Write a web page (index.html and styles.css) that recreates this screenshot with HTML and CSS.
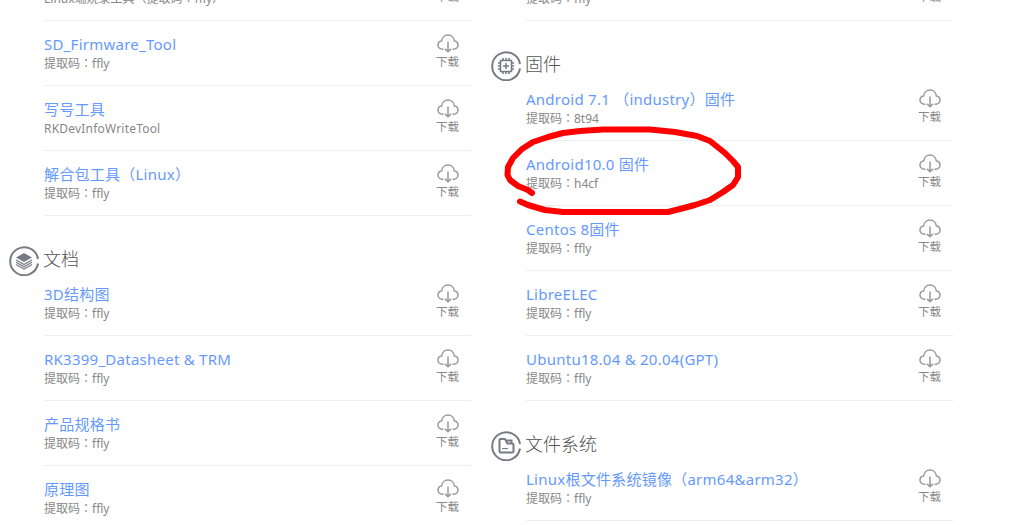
FILE: index.html
```html
<!DOCTYPE html>
<html lang="zh-TW">
<head>
    <meta charset="UTF-8">
    <title>资料下载</title>
    <link rel="stylesheet" href="styles.css">
</head>
<body>

<!-- icons shared by the lists -->
<svg class="sprite">
    <symbol id="cloud" viewBox="0 0 22 19">
        <path d="M6.500 15.200H5.400C2.900 15.200 1 13.400 1 11.100c0-2.100 1.500-3.800 3.600-4.100C5 3.600 7.600 1 11 1s6 2.600 6.400 6c2.100.3 3.600 2 3.600 4.100 0 2.300-1.900 4.100-4.400 4.100h-1.100M11 7.500v10M8 14.900l3 2.900 3-2.900"/>
    </symbol>
    <symbol id="ring" viewBox="0 0 30 30">
        <path d="M29 13A14 14 0 1 0 29 17.500"/>
    </symbol>
</svg>

<div class="container">
    <div class="column">
        <ul class="list">
            <li class="item">
                <div class="info"><a class="name" href="#">Linux烧录工具</a><p class="code">Linux端烧录工具（提取码：ffly）</p></div>
                <a class="download" href="#"><svg><use href="#cloud"/></svg>下载</a>
            </li>
            <li class="item">
                <div class="info"><a class="name" href="#">SD_Firmware_Tool</a><p class="code">提取码：ffly</p></div>
                <a class="download" href="#"><svg><use href="#cloud"/></svg>下载</a>
            </li>
            <li class="item">
                <div class="info"><a class="name" href="#">写号工具</a><p class="code latin">RKDevInfoWriteTool</p></div>
                <a class="download" href="#"><svg><use href="#cloud"/></svg>下载</a>
            </li>
            <li class="item">
                <div class="info"><a class="name" href="#">解合包工具（Linux）</a><p class="code">提取码：ffly</p></div>
                <a class="download" href="#"><svg><use href="#cloud"/></svg>下载</a>
            </li>
        </ul>

        <h3 class="heading">
            <svg class="heading-icon" viewBox="0 0 30 30">
                <use href="#ring"/>
                <path class="solid" d="M15 7l8 4.500-8 4.500-8-4.500z"/>
                <path class="thin" d="M7 14l8 4.500 8-4.500M7 16.300l8 4.500 8-4.500M7 18.600l8 4.500 8-4.500"/>
            </svg>
            <span>文档</span>
        </h3>
        <ul class="list">
            <li class="item">
                <div class="info"><a class="name" href="#">3D结构图</a><p class="code">提取码：ffly</p></div>
                <a class="download" href="#"><svg><use href="#cloud"/></svg>下载</a>
            </li>
            <li class="item">
                <div class="info"><a class="name" href="#">RK3399_Datasheet &amp; TRM</a><p class="code">提取码：ffly</p></div>
                <a class="download" href="#"><svg><use href="#cloud"/></svg>下载</a>
            </li>
            <li class="item">
                <div class="info"><a class="name" href="#">产品规格书</a><p class="code">提取码：ffly</p></div>
                <a class="download" href="#"><svg><use href="#cloud"/></svg>下载</a>
            </li>
            <li class="item">
                <div class="info"><a class="name" href="#">原理图</a><p class="code">提取码：ffly</p></div>
                <a class="download" href="#"><svg><use href="#cloud"/></svg>下载</a>
            </li>
        </ul>
    </div>

    <div class="column">
        <ul class="list">
            <li class="item">
                <div class="info"><a class="name" href="#">U-Boot</a><p class="code">提取码：ffly</p></div>
                <a class="download" href="#"><svg><use href="#cloud"/></svg>下载</a>
            </li>
        </ul>

        <h3 class="heading">
            <svg class="heading-icon" viewBox="0 0 30 30">
                <use href="#ring"/>
                <path class="chip" d="M9.500 9.500h11v11h-11zM15 12v6M12 15h6"/>
                <path class="chip" d="M12 7v2M15 7v2M18 7v2M12 21v2M15 21v2M18 21v2M7 12h2M7 15h2M7 18h2M21 12h2M21 15h2M21 18h2"/>
            </svg>
            <span>固件</span>
        </h3>
        <ul class="list">
            <li class="item">
                <div class="info"><a class="name" href="#">Android 7.1 （industry）固件</a><p class="code">提取码：8t94</p></div>
                <a class="download" href="#"><svg><use href="#cloud"/></svg>下载</a>
            </li>
            <li class="item marked">
                <div class="info"><a class="name" href="#">Android10.0 固件</a><p class="code">提取码：h4cf</p></div>
                <a class="download" href="#"><svg><use href="#cloud"/></svg>下载</a>
                <svg class="scribble" viewBox="500 120 250 100">
                    <path d="M532 193L528 190 518 186 510 180 507.500 175 508 167 513 158 522 149 533 142 548 137 563 133 580 131 603 129.500 650 129.500 675 132 697 136 710 141 725 153 733 161 738 167 738 177 733 185 723 192 710 200 695 205 680 209 668 212 563 212 545 210 528 205 520 201.500"/>
                </svg>
            </li>
            <li class="item">
                <div class="info"><a class="name" href="#">Centos 8固件</a><p class="code">提取码：ffly</p></div>
                <a class="download" href="#"><svg><use href="#cloud"/></svg>下载</a>
            </li>
            <li class="item">
                <div class="info"><a class="name" href="#">LibreELEC</a><p class="code">提取码：ffly</p></div>
                <a class="download" href="#"><svg><use href="#cloud"/></svg>下载</a>
            </li>
            <li class="item">
                <div class="info"><a class="name" href="#">Ubuntu18.04 &amp; 20.04(GPT)</a><p class="code">提取码：ffly</p></div>
                <a class="download" href="#"><svg><use href="#cloud"/></svg>下载</a>
            </li>
        </ul>

        <h3 class="heading">
            <svg class="heading-icon" viewBox="0 0 30 30">
                <use href="#ring"/>
                <path d="M9.500 8H14l2.500 4.500H21q1.500 0 1.500 1.500v6q0 1.500-1.500 1.500H9.500Q8.500 21.500 8.500 20V9q0-1 1-1zM15 9.500h5.500v3"/>
                <path class="thin" d="M11 17.500h6"/>
            </svg>
            <span>文件系统</span>
        </h3>
        <ul class="list">
            <li class="item">
                <div class="info"><a class="name" href="#">Linux根文件系统镜像（arm64&amp;arm32）</a><p class="code">提取码：ffly</p></div>
                <a class="download" href="#"><svg><use href="#cloud"/></svg>下载</a>
            </li>
        </ul>
    </div>
</div>

</body>
</html>
```
FILE: styles.css
```css
body {
    margin: 0;
    height: 525px;
    overflow: hidden;
    background-color: #ffffff;
    font-family: "Noto Sans", "Noto Sans CJK TC", sans-serif;
}

.sprite {
    display: none;
}

.container {
    display: flex;
    gap: 55px;
    margin-top: -44px;
    padding-left: 44px;
}

.column {
    width: 427px;
}

.list {
    list-style: none;
    margin: 0;
    padding: 0;
}

.item {
    display: flex;
    justify-content: space-between;
    box-sizing: border-box;
    height: 65px;
    padding: 13px 12px 0 0;
    border-bottom: 1px solid #eeeeee;
}

.info {
    white-space: nowrap;
}

.name {
    display: block;
    font-size: 15px;
    line-height: 20px;
    letter-spacing: 0.25px;
    color: #6699ff;
    text-decoration: none;
}

.code {
    margin: 1px 0 0;
    font-size: 12px;
    line-height: 18px;
    color: #888888;
    font-variant-ligatures: none;
}

.code.latin {
    letter-spacing: 0.2px;
}

.download {
    display: flex;
    flex-direction: column;
    align-items: center;
    font-size: 11.5px;
    line-height: 18px;
    color: #888888;
    text-decoration: none;
}

.download svg {
    width: 22px;
    height: 19px;
    fill: none;
    stroke: #999999;
    stroke-width: 1.5;
}

.heading {
    display: flex;
    align-items: flex-start;
    gap: 4px;
    box-sizing: border-box;
    height: 55px;
    margin: 0 0 0 -35px;
    padding-top: 30px;
    font-size: 18px;
    font-weight: 300;
    line-height: 26px;
    color: #555555;
}

.heading-icon {
    width: 30px;
    height: 30px;
    fill: none;
    stroke: #777b83;
    stroke-width: 2;
}

.heading-icon .solid {
    fill: #777b83;
    stroke: none;
}

.heading-icon .thin {
    stroke-width: 1.1;
}

.heading-icon .chip {
    stroke-width: 1.6;
}

.marked {
    position: relative;
}

/* hand-drawn circle over the row */
.scribble {
    position: absolute;
    top: -21px;
    left: -26px;
    width: 250px;
    height: 100px;
    fill: none;
    stroke: #ff0000;
    stroke-width: 6;
    stroke-linecap: round;
    stroke-linejoin: round;
    pointer-events: none;
}
```
